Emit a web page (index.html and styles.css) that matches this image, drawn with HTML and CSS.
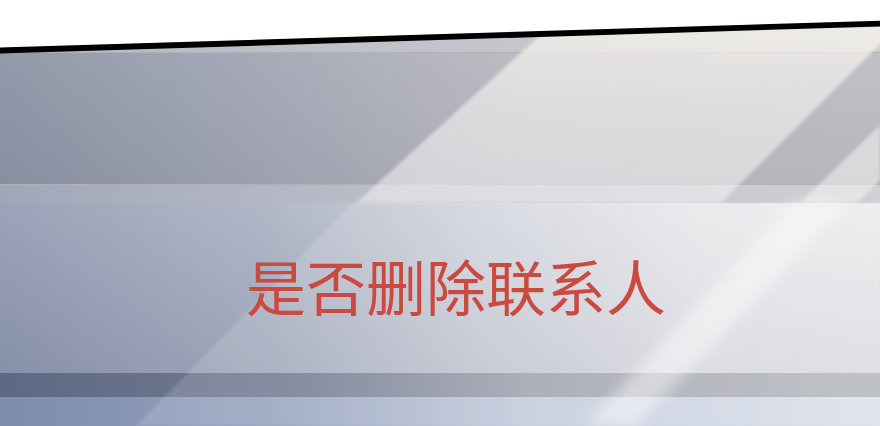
FILE: index.html
```html
<!DOCTYPE html>
<html lang="zh-CN">
<head>
<meta charset="utf-8">
<title>是否删除联系人</title>
<link rel="stylesheet" href="styles.css">
</head>
<body>
<div class="panel">
  <div class="strip-top"></div>
  <div class="rule"></div>
  <div class="upper"></div>
  <div class="rule"></div>
  <div class="band-light"></div>
  <div class="main">
    <p class="caption">是否删除联系人</p>
  </div>
  <div class="band-dark"></div>
  <div class="bottom"></div>

  <svg class="light" viewBox="0 0 880 426" width="880" height="426" aria-hidden="true">
    <defs>
      <linearGradient id="gA" x1="0" y1="0" x2="0" y2="1">
        <stop offset="0" stop-color="#fbf7ee" stop-opacity="0.75"/>
        <stop offset="0.5" stop-color="#f6f3f0" stop-opacity="0.6"/>
        <stop offset="1" stop-color="#f4f2f4" stop-opacity="0.55"/>
      </linearGradient>
      <filter id="blur6" x="-20%" y="-20%" width="140%" height="140%">
        <feGaussianBlur stdDeviation="7"/>
      </filter>
      <filter id="blur2" x="-20%" y="-20%" width="140%" height="140%">
        <feGaussianBlur stdDeviation="1.5"/>
      </filter>
    </defs>
    <polygon points="579,0 924,0 721,203 356,203" fill="url(#gA)" filter="url(#blur2)"/>
    <polygon points="880,125 880,180 857,203 800,203" fill="#f4f3f2" fill-opacity="0.55" filter="url(#blur2)"/>
    <polygon points="353,203 880,203 880,426 136,426" fill="#ffffff" fill-opacity="0.14" filter="url(#blur2)"/>
    <polygon points="792,203 848,203 636,426 585,426" fill="#ffffff" fill-opacity="0.45" filter="url(#blur6)"/>
    <polygon points="0,0 880,0 880,21 0,48" fill="#ffffff"/>
    <polygon points="0,47.5 880,20.7 880,26.5 0,53.5" fill="#000000"/>
  </svg>
</div>
</body>
</html>
```

FILE: styles.css
```css
html, body {
  margin: 0;
  padding: 0;
  width: 880px;
  height: 426px;
  overflow: hidden;
  background: #ffffff;
}

.panel {
  position: relative;
  width: 880px;
  height: 426px;
  display: flex;
  flex-direction: column;
}

.strip-top {
  height: 52px;
  background: linear-gradient(to right, #b4b8c2 0%, #c3c4ca 50%, #cfcfd3 100%);
}

.rule {
  height: 1px;
  background: #8e8f98;
  opacity: 0.7;
}

.upper {
  height: 131px;
  background:
    linear-gradient(to bottom, rgba(255,255,255,0.06), rgba(0,0,20,0.03)),
    linear-gradient(to right, #8b93a5 0%, #a6a9b6 35%, #b8b8c0 60%, #bdbcc2 100%);
}

.band-light {
  height: 18px;
  background: linear-gradient(to right, #a1a7b7 0%, #bcbfc9 45%, #d0d0d4 100%);
}

.main {
  height: 170px;
  box-sizing: border-box;
  display: flex;
  align-items: center;
  justify-content: center;
  padding-left: 32px;
  padding-bottom: 6px;
  background:
    linear-gradient(to bottom, rgba(255,255,255,0.1), rgba(20,30,70,0.07)),
    linear-gradient(to right, #8f99b0 0%, #a8afc1 30%, #cdd0d9 55%, #e5e5e9 80%, #e9e9ec 100%);
}

.caption {
  position: relative;
  z-index: 2;
  margin: 0;
  font-family: "Noto Sans CJK SC", "Noto Sans", sans-serif;
  font-size: 60px;
  line-height: 60px;
  font-weight: 400;
  color: #cb4a3f;
  white-space: nowrap;
}

.band-dark {
  height: 24px;
  background: linear-gradient(to right, #5d6883 0%, #737c93 35%, #9fa2ae 60%, #b7b8bf 100%);
}

.bottom {
  height: 29px;
  background: linear-gradient(to right, #7d8cad 0%, #94a1bd 30%, #c2cadb 60%, #dbe0ea 100%);
}

.light {
  position: absolute;
  left: 0;
  top: 0;
  z-index: 1;
  pointer-events: none;
}
```
